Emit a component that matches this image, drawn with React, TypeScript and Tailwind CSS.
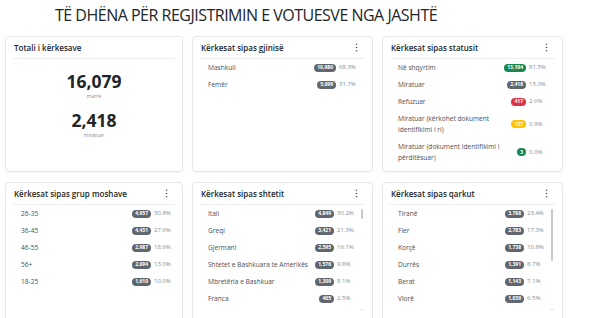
import type { ReactNode } from "react";

type Row = { label: string; count: string; pct: string; tone?: "grey" | "green" | "red" | "yellow" };

const gender: Row[] = [
  { label: "Mashkull", count: "10,980", pct: "68.3%" },
  { label: "Femër", count: "5,099", pct: "31.7%" },
];

const status: Row[] = [
  { label: "Në shqyrtim", count: "13,104", pct: "81.5%", tone: "green" },
  { label: "Miratuar", count: "2,418", pct: "15.0%" },
  { label: "Refuzuar", count: "417", pct: "2.6%", tone: "red" },
  { label: "Miratuar (kërkohet dokument identifikimi i ri)", count: "137", pct: "0.9%", tone: "yellow" },
  { label: "Miratuar (dokument identifikimi i përditësuar)", count: "3", pct: "0.0%", tone: "green" },
];

const ages: Row[] = [
  { label: "26-35", count: "4,957", pct: "30.8%" },
  { label: "36-45", count: "4,431", pct: "27.6%" },
  { label: "46-55", count: "2,987", pct: "18.6%" },
  { label: "56+", count: "2,094", pct: "13.0%" },
  { label: "18-25", count: "1,610", pct: "10.0%" },
];

const countries: Row[] = [
  { label: "Itali", count: "4,849", pct: "30.2%" },
  { label: "Greqi", count: "3,421", pct: "21.3%" },
  { label: "Gjermani", count: "2,595", pct: "16.1%" },
  { label: "Shtetet e Bashkuara te Amerikës", count: "1,576", pct: "9.8%" },
  { label: "Mbretëria e Bashkuar", count: "1,309", pct: "8.1%" },
  { label: "Franca", count: "405", pct: "2.5%" },
];

const districts: Row[] = [
  { label: "Tiranë", count: "3,768", pct: "23.4%" },
  { label: "Fier", count: "2,783", pct: "17.3%" },
  { label: "Korçë", count: "1,738", pct: "10.8%" },
  { label: "Durrës", count: "1,391", pct: "8.7%" },
  { label: "Berat", count: "1,143", pct: "7.1%" },
  { label: "Vlorë", count: "1,039", pct: "6.5%" },
];

const toneClass = {
  grey: "bg-[#5f666d] text-white",
  green: "bg-[#198754] text-white",
  red: "bg-[#dc3545] text-white",
  yellow: "bg-[#ffc107] text-white",
};

function Dots() {
  return (
    <svg width="3" height="9" viewBox="0 0 3 9" className="text-[#555]">
      <circle cx="1.5" cy="1.2" r="0.8" fill="currentColor" />
      <circle cx="1.5" cy="4.5" r="0.8" fill="currentColor" />
      <circle cx="1.5" cy="7.8" r="0.8" fill="currentColor" />
    </svg>
  );
}

function Card({ title, menu = true, className = "", children }: { title: string; menu?: boolean; className?: string; children: ReactNode }) {
  return (
    <div className={`relative bg-white border border-[#e4e6e9] rounded-[4px] shadow-[0_1px_2px_rgba(0,0,0,0.04)] overflow-hidden ${className}`}>
      <div className="mx-[7px] h-[22px] flex items-center justify-between border-b border-[#eceef0] pl-[1px] pr-[7px]">
        <span className="text-[8px] font-semibold text-[#212529]">{title}</span>
        {menu && <Dots />}
      </div>
      {children}
    </div>
  );
}

function StatList({ rows, pr = "pr-[15px]" }: { rows: Row[]; pr?: string }) {
  return (
    <div className={`pl-[15px] ${pr}`}>
      {rows.map((r) => (
        <div key={r.label} className="flex items-center gap-[3px] py-[3px] leading-[11px]">
          <span className="flex-1 min-w-0 text-[6.6px] text-[#495057]">{r.label}</span>
          <div className="flex items-center gap-[3px] shrink-0">
            <span className={`rounded-full h-[8px] px-[3px] flex items-center text-[5px] font-bold leading-none ${toneClass[r.tone ?? "grey"]}`}>
              {r.count}
            </span>
            <span className="text-[6px] text-[#868e96] w-[18px]">{r.pct}</span>
          </div>
        </div>
      ))}
    </div>
  );
}

function Thumb({ top, height }: { top: string; height: string }) {
  return (
    <>
      <div className={`absolute right-[9px] w-[2.5px] rounded-full bg-[#c8c8c8] ${top} ${height}`} />
      <div className="absolute right-[9px] top-[126px] w-[2px] h-[1px] bg-[#d6d6d6]" />
    </>
  );
}

export default function App() {
  return (
    <div className="w-[600px] h-[318px] overflow-hidden bg-white" style={{ fontFamily: "'Open Sans', sans-serif" }}>
      <div className="h-[36px] pl-[55px] pt-[3px]">
        <h1 className="text-[16px] text-[#212529] tracking-[-0.5px] leading-[24px]">
          TË DHËNA PËR REGJISTRIMIN E VOTUESVE NGA JASHTË
        </h1>
      </div>

      <div className="ml-[5px] grid grid-cols-[178px_181px_181px] gap-x-[9px] gap-y-[10px]">
        <Card title="Totali i kërkesave" menu={false} className="h-[136px]">
          <div className="flex flex-col items-center pt-[11px] text-[#212529]">
            <div className="text-[17.5px] font-bold leading-[22px]">16,079</div>
            <div className="text-[5px] text-[#868e96] mt-[1px]">marrë</div>
            <div className="text-[17.5px] font-bold leading-[22px] mt-[8px]">2,418</div>
            <div className="text-[5px] text-[#868e96] mt-[1px]">miratuar</div>
          </div>
        </Card>

        <Card title="Kërkesat sipas gjinisë" className="h-[136px]">
          <StatList rows={gender} />
        </Card>

        <Card title="Kërkesat sipas statusit" className="h-[136px]">
          <StatList rows={status} />
        </Card>

        <Card title="Kërkesat sipas grup moshave" className="h-[150px]">
          <StatList rows={ages} pr="pr-[10px]" />
        </Card>

        <Card title="Kërkesat sipas shtetit" className="h-[150px]">
          <StatList rows={countries} pr="pr-[17px]" />
          <Thumb top="top-[26px]" height="h-[10px]" />
        </Card>

        <Card title="Kërkesat sipas qarkut" className="h-[150px]">
          <StatList rows={districts} pr="pr-[17px]" />
          <Thumb top="top-[26px]" height="h-[52px]" />
        </Card>
      </div>
    </div>
  );
}
